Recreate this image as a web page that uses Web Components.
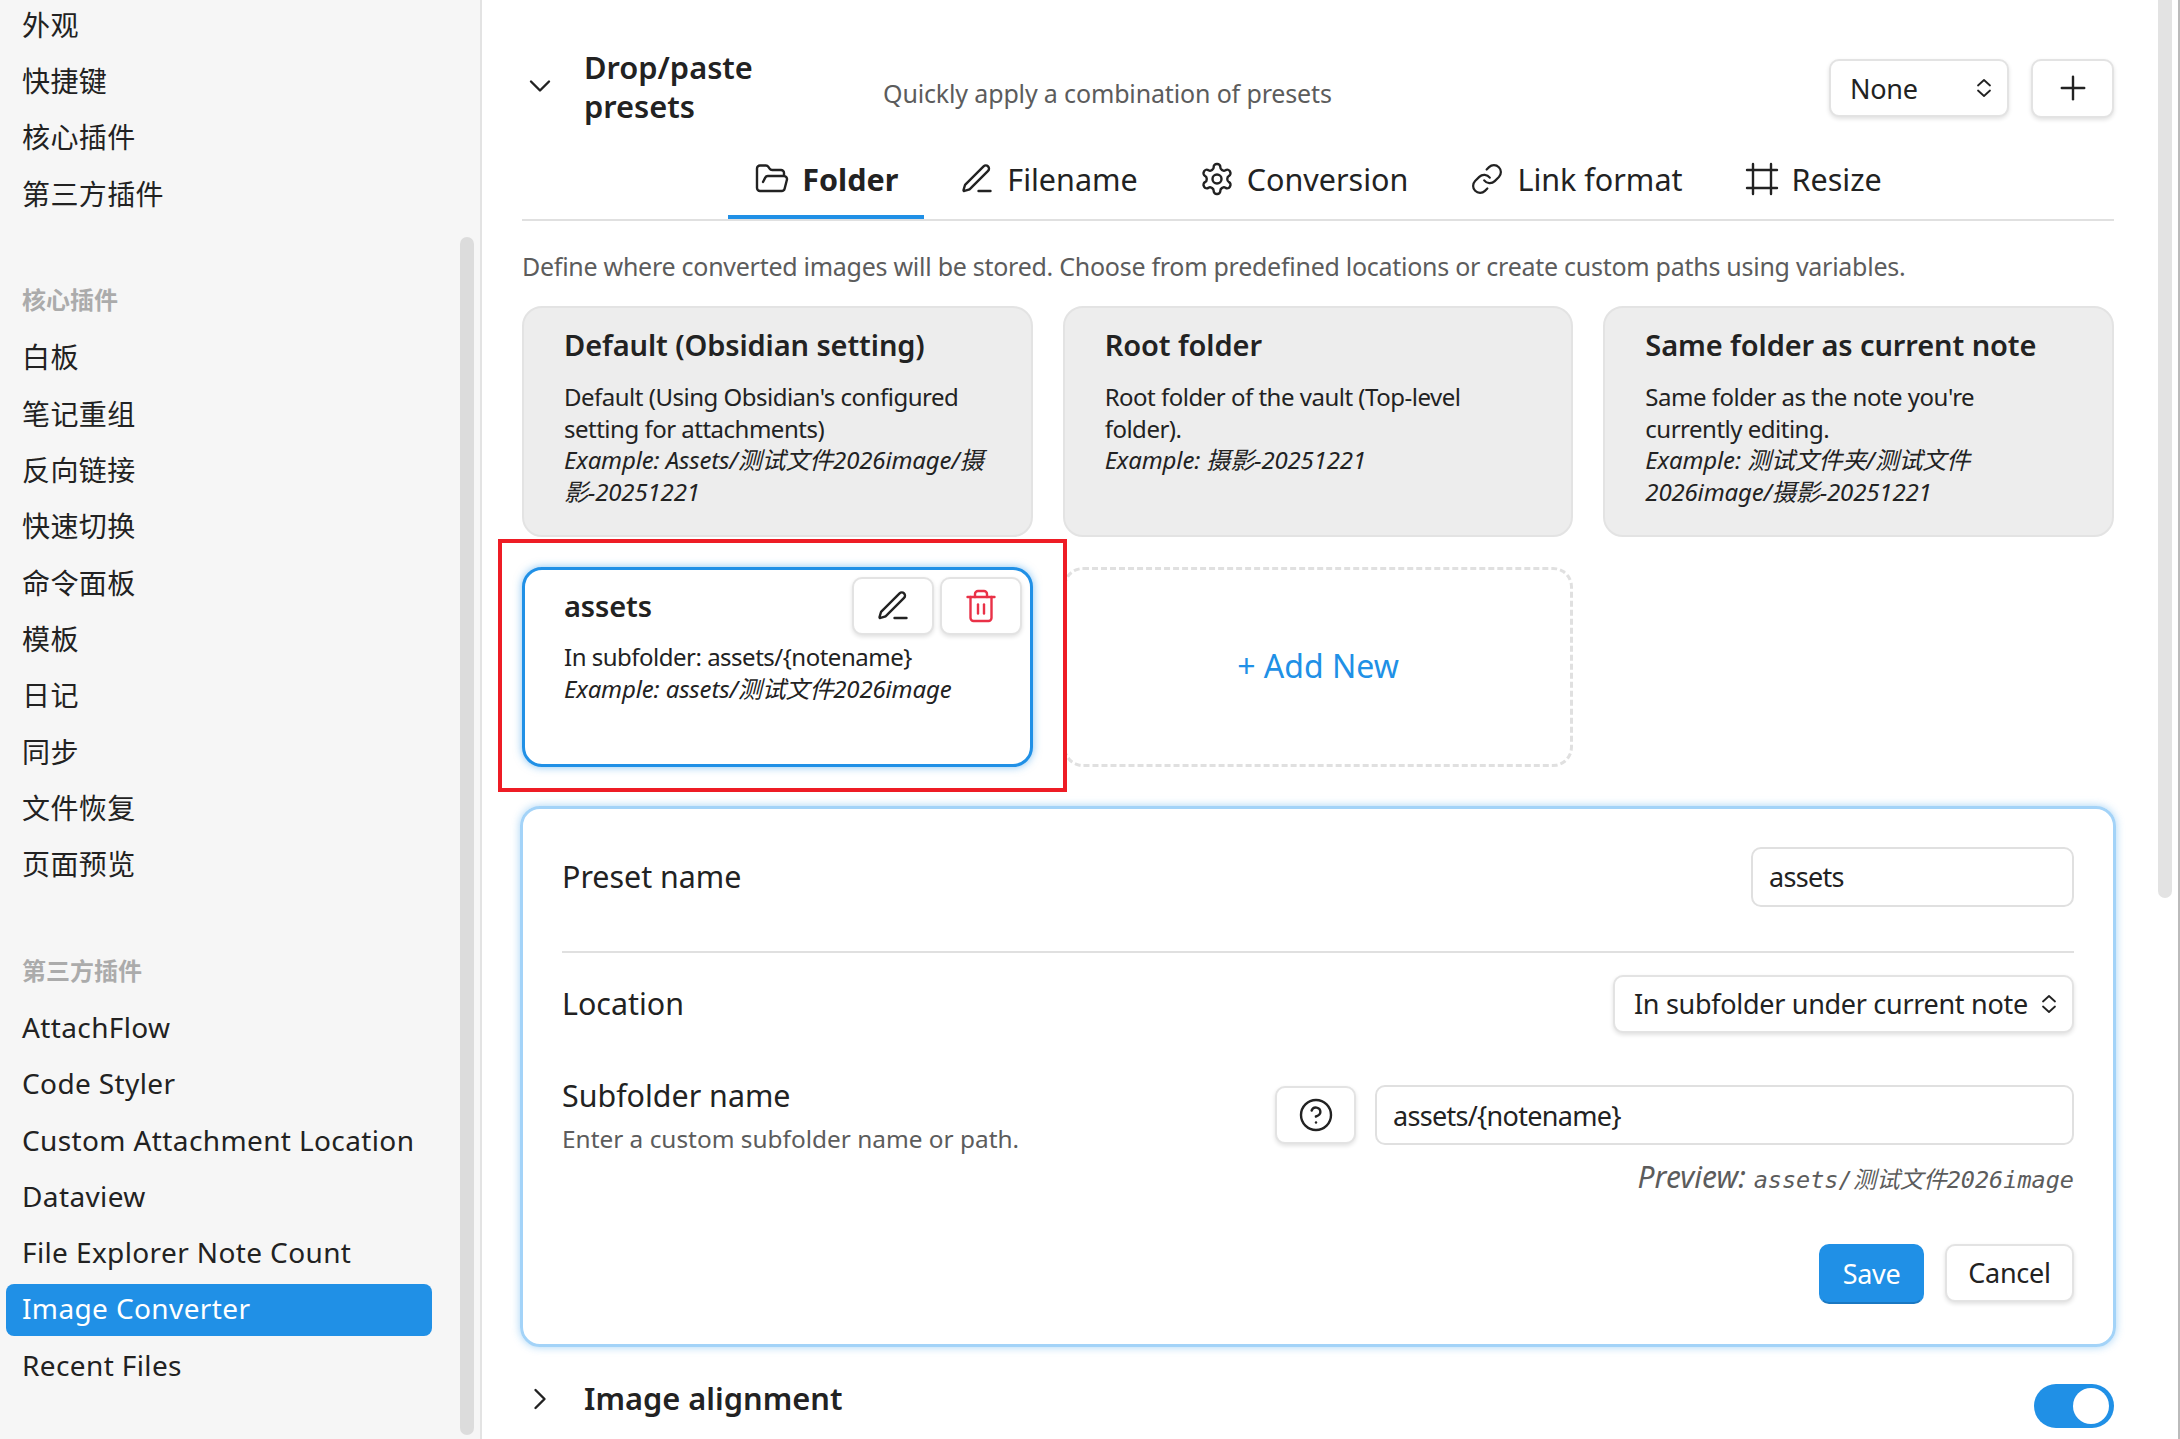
<!DOCTYPE html>
<html lang="zh">
<head>
<meta charset="utf-8">
<title>Image Converter settings</title>
<style>
    html, body {
        margin: 0;
        height: 100%;
        overflow: hidden;
        background: #fff;
    }
    body {
        font-family: "Noto Sans", "Noto Sans CJK SC", sans-serif;
        color: #222;
    }
</style>
</head>
<body>

<settings-shell>
    <side-nav slot="nav">
        <nav-item>外观</nav-item>
        <nav-item>快捷键</nav-item>
        <nav-item>核心插件</nav-item>
        <nav-item>第三方插件</nav-item>
        <nav-heading>核心插件</nav-heading>
        <nav-item>白板</nav-item>
        <nav-item>笔记重组</nav-item>
        <nav-item>反向链接</nav-item>
        <nav-item>快速切换</nav-item>
        <nav-item>命令面板</nav-item>
        <nav-item>模板</nav-item>
        <nav-item>日记</nav-item>
        <nav-item>同步</nav-item>
        <nav-item>文件恢复</nav-item>
        <nav-item>页面预览</nav-item>
        <nav-heading style="margin-bottom:7px">第三方插件</nav-heading>
        <nav-item latin>AttachFlow</nav-item>
        <nav-item latin>Code Styler</nav-item>
        <nav-item latin>Custom Attachment Location</nav-item>
        <nav-item latin>Dataview</nav-item>
        <nav-item latin>File Explorer Note Count</nav-item>
        <nav-item latin active>Image Converter</nav-item>
        <nav-item latin>Recent Files</nav-item>
    </side-nav>

    <section-head open>
        Drop/paste presets
        <span slot="desc">Quickly apply a combination of presets</span>
        <ui-select slot="actions" style="width:180px">None</ui-select>
        <ui-button slot="actions" icon="plus" style="width:83px;height:59px"></ui-button>
    </section-head>

    <tab-bar>
        <tab-item icon="folder" active>Folder</tab-item>
        <tab-item icon="pen">Filename</tab-item>
        <tab-item icon="gear">Conversion</tab-item>
        <tab-item icon="link">Link format</tab-item>
        <tab-item icon="frame">Resize</tab-item>
    </tab-bar>

    <hint-line>Define where converted images will be stored. Choose from predefined locations or create custom paths using variables.</hint-line>

    <preset-grid>
        <preset-card name="Default (Obsidian setting)">
            Default (Using Obsidian's configured setting for attachments)
            <span slot="example">Example: Assets/测试文件2026image/摄影-20251221</span>
        </preset-card>
        <preset-card name="Root folder">
            Root folder of the vault (Top-level folder).
            <span slot="example">Example: 摄影-20251221</span>
        </preset-card>
        <preset-card name="Same folder as current note">
            Same folder as the note you're currently editing.
            <span slot="example">Example: 测试文件夹/测试文件2026image/摄影-20251221</span>
        </preset-card>
        <preset-card name="assets" selected>
            In subfolder: assets/{notename}
            <span slot="example">Example: assets/测试文件2026image</span>
            <ui-button slot="tools" icon="pen" style="width:82px;height:58px"></ui-button>
            <ui-button slot="tools" icon="trash" danger style="width:82px;height:58px"></ui-button>
        </preset-card>
        <add-card>+ Add New</add-card>
    </preset-grid>

    <edit-panel>
        <form-row divided>
            Preset name
            <ui-input slot="control" style="width:323px">assets</ui-input>
        </form-row>
        <form-row style="margin-top:22px">
            Location
            <ui-select slot="control" style="width:461px">In subfolder under current note</ui-select>
        </form-row>
        <form-row style="margin-top:43px">
            Subfolder name
            <span slot="desc">Enter a custom subfolder name or path.</span>
            <ui-button slot="control" icon="help" style="width:81px;height:58px"></ui-button>
            <ui-input slot="control" style="width:699px">assets/{notename}</ui-input>
        </form-row>
        <preview-line>Preview: <code slot="path">assets/测试文件2026image</code></preview-line>
        <button-row>
            <ui-button primary style="width:105px;height:60px">Save</ui-button>
            <ui-button style="width:129px;height:58px">Cancel</ui-button>
        </button-row>
    </edit-panel>

    <section-head style="margin-top:23px">
        Image alignment
        <toggle-switch slot="actions" on style="margin-top:12px"></toggle-switch>
    </section-head>

    <mark-box slot="overlay" style="left:498px;top:539px;width:569px;height:253px"></mark-box>
</settings-shell>

<script>
    const ICONS = {
        plus: '<path d="M4.5 12h15"/><path d="M12 4.5v15"/>',
        down: '<path d="m6 9 6 6 6-6"/>',
        right: '<path d="m9 18 6-6-6-6"/>',
        folder: '<path d="m6 14 1.5-2.9A2 2 0 0 1 9.24 10H20a2 2 0 0 1 1.94 2.5l-1.54 6a2 2 0 0 1-1.95 1.5H4a2 2 0 0 1-2-2V5a2 2 0 0 1 2-2h3.9a2 2 0 0 1 1.69.9l.81 1.2a2 2 0 0 0 1.67.9H18a2 2 0 0 1 2 2v2"/>',
        pen: '<path d="M13 20h8"/><path d="M16.376 3.622a1 1 0 0 1 3.002 3.002L7.368 18.635a2 2 0 0 1-.855.506l-2.872.838a.5.5 0 0 1-.62-.62l.838-2.872a2 2 0 0 1 .506-.854z"/>',
        gear: '<path d="M12.22 2h-.44a2 2 0 0 0-2 2v.18a2 2 0 0 1-1 1.73l-.43.25a2 2 0 0 1-2 0l-.15-.08a2 2 0 0 0-2.73.73l-.22.38a2 2 0 0 0 .73 2.73l.15.1a2 2 0 0 1 1 1.72v.51a2 2 0 0 1-1 1.74l-.15.09a2 2 0 0 0-.73 2.73l.22.38a2 2 0 0 0 2.73.73l.15-.08a2 2 0 0 1 2 0l.43.25a2 2 0 0 1 1 1.73V20a2 2 0 0 0 2 2h.44a2 2 0 0 0 2-2v-.18a2 2 0 0 1 1-1.73l.43-.25a2 2 0 0 1 2 0l.15.08a2 2 0 0 0 2.73-.73l.22-.39a2 2 0 0 0-.73-2.73l-.15-.08a2 2 0 0 1-1-1.74v-.5a2 2 0 0 1 1-1.74l.15-.09a2 2 0 0 0 .73-2.73l-.22-.38a2 2 0 0 0-2.73-.73l-.15.08a2 2 0 0 1-2 0l-.43-.25a2 2 0 0 1-1-1.73V4a2 2 0 0 0-2-2z"/><circle cx="12" cy="12" r="3"/>',
        link: '<g transform="translate(12 12) scale(.93) translate(-12 -12)"><path d="M10 13a5 5 0 0 0 7.54.54l3-3a5 5 0 0 0-7.07-7.07l-1.72 1.71"/><path d="M14 11a5 5 0 0 0-7.54-.54l-3 3a5 5 0 0 0 7.07 7.07l1.71-1.71"/></g>',
        frame: '<path d="M22 6H2"/><path d="M22 18H2"/><path d="M6 2v20"/><path d="M18 2v20"/>',
        trash: '<path d="M3 6h18"/><path d="M19 6v14c0 1-1 2-2 2H7c-1 0-2-1-2-2V6"/><path d="M8 6V4c0-1 1-2 2-2h4c1 0 2 1 2 2v2"/><path d="M10 11v6"/><path d="M14 11v6"/>',
        help: '<circle cx="12" cy="12" r="10"/><path d="M9.09 9a3 3 0 0 1 5.83 1c0 2-3 3-3 3"/><path d="M12 17h.01"/>'
    };

    const icon = (name, size = 36, width = 1.6) =>
        `<svg width="${size}" height="${size}" viewBox="0 0 24 24" fill="none" stroke="currentColor"
              stroke-width="${width}" stroke-linecap="round" stroke-linejoin="round">${ICONS[name]}</svg>`;

    class ShadowElement extends HTMLElement {
        connectedCallback() {
            if (this.shadowRoot) return;
            this.attachShadow({ mode: 'open' }).innerHTML = this.render();
        }
        render() {
            return '<slot></slot>';
        }
    }

    class SettingsShell extends ShadowElement {
        render() {
            return `<style>
                :host { display: flex; position: relative; height: 1439px; width: 2180px; overflow: hidden; }
                .nav { flex: 0 0 480px; border-right: 2px solid #e3e3e3; background: #f6f6f6; position: relative; overflow: hidden; }
                .main { flex: 1; min-width: 0; padding: 48px 64px 0 40px; border-right: 2px solid #bbb; }
                .thumb { position: absolute; width: 14px; border-radius: 7px; }
                .thumb.nav-bar { left: 460px; top: 237px; height: 1198px; background: #dcdcdc; }
                .thumb.main-bar { left: 2158px; top: -8px; height: 906px; background: #e3e3e3; }
            </style>
            <div class="nav"><slot name="nav"></slot></div>
            <div class="main"><slot></slot></div>
            <div class="thumb nav-bar"></div>
            <div class="thumb main-bar"></div>
            <slot name="overlay"></slot>`;
        }
    }

    class SideNav extends ShadowElement {
        render() {
            return `<style>
                :host { display: flex; flex-direction: column; padding: 0 48px 0 6px; margin-top: -2.4px; }
            </style><slot></slot>`;
        }
    }

    class NavItem extends ShadowElement {
        render() {
            return `<style>
                :host { display: flex; align-items: center; box-sizing: border-box; height: 52px; margin-bottom: 4.3px; padding: 0 16px;
                        border-radius: 8px; font-size: 28px; letter-spacing: 0.38px; white-space: nowrap; color: #222; }
                :host([latin]) { padding-bottom: 3px; }
                :host([active]) { background: #2090e6; color: #fff; }
            </style><slot></slot>`;
        }
    }

    class NavHeading extends ShadowElement {
        render() {
            return `<style>
                :host { display: flex; align-items: center; height: 52px; margin: 50px 0 5.7px; padding: 0 16px;
                        font-size: 24px; font-weight: 700; color: #ababab; }
            </style><slot></slot>`;
        }
    }

    class SectionHead extends ShadowElement {
        render() {
            const open = this.hasAttribute('open');
            return `<style>
                :host { display: flex; align-items: center; }
                .chevron { flex: 0 0 36px; display: flex; color: #222; }
                :host([open]) .chevron { margin-top: -3px; }
                .title { margin-left: 26px; font-size: 30.8px; font-weight: 600; line-height: 39px; color: #222; }
                :host([open]) .title { width: 240px; margin-right: 59px; }
                .desc { flex: 1; font-size: 25px; letter-spacing: -0.15px; color: #5c5c5c; padding-top: 12px; }
                .actions { display: flex; gap: 22px; align-items: center; margin-top: 2px; }
            </style>
            <div class="chevron">${icon(open ? 'down' : 'right')}</div>
            <div class="title"><slot></slot></div>
            <div class="desc"><slot name="desc"></slot></div>
            <div class="actions"><slot name="actions"></slot></div>`;
        }
    }

    class TabBar extends ShadowElement {
        render() {
            return `<style>
                :host { display: flex; justify-content: center; gap: 9px; margin-top: 17px; border-bottom: 2px solid #e0e0e0; }
            </style><slot></slot>`;
        }
    }

    class TabItem extends ShadowElement {
        render() {
            return `<style>
                :host { display: flex; align-items: center; gap: 12px; height: 72px; padding: 0 26px;
                        border-bottom: 4px solid transparent; font-size: 30.5px; color: #222; }
                :host([active]) { border-bottom-color: #2090e6; font-weight: 700; }
                svg { display: block; flex: none; }
            </style>${icon(this.getAttribute('icon'))}<slot></slot>`;
        }
    }

    class HintLine extends ShadowElement {
        render() {
            return `<style>
                :host { display: block; margin-top: 28px; font-size: 25px; line-height: 34px; letter-spacing: -0.27px; color: #5c5c5c; white-space: nowrap; }
            </style><slot></slot>`;
        }
    }

    class PresetGrid extends ShadowElement {
        render() {
            return `<style>
                :host { display: grid; grid-template-columns: repeat(3, 1fr); column-gap: 30px; row-gap: 30px; margin-top: 23px; }
            </style><slot></slot>`;
        }
    }

    class PresetCard extends ShadowElement {
        render() {
            return `<style>
                :host { display: block; position: relative; box-sizing: border-box; min-height: 200px; padding: 17px 40px 27px 40px;
                        background: #ededed; border: 2px solid #e3e3e3; border-radius: 20px; color: #222; }
                :host([selected]) { background: #fff; border: 3px solid #2090e6; box-shadow: 0 0 8px rgba(32,144,230,.55); padding: 16px 30px 25px 39px; }
                :host([selected]) .name { margin-bottom: 15px; }
                .name { font-size: 29px; font-weight: 600; line-height: 40px; letter-spacing: -0.1px; margin-bottom: 16px; }
                .body { font-size: 24px; line-height: 31.7px; letter-spacing: -0.5px; }
                .example { display: block; font-style: italic; letter-spacing: -0.15px; }
                .tools { position: absolute; top: 7px; right: 8px; display: flex; gap: 6px; }
            </style>
            <div class="name">${this.getAttribute('name')}</div>
            <div class="body"><slot></slot><span class="example"><slot name="example"></slot></span></div>
            <div class="tools"><slot name="tools"></slot></div>`;
        }
    }

    class AddCard extends ShadowElement {
        render() {
            return `<style>
                :host { display: flex; align-items: center; justify-content: center; box-sizing: border-box; padding-bottom: 2px;
                        border: 3px dashed #e0e0e0; border-radius: 20px; font-size: 32px; color: #2090e6; }
            </style><slot></slot>`;
        }
    }

    class EditPanel extends ShadowElement {
        render() {
            return `<style>
                :host { display: block; box-sizing: border-box; margin: 39px -2px 0; padding: 38px 39px 40px 39px;
                        border: 3px solid #a3d3f8; border-radius: 20px; box-shadow: 0 0 8px rgba(32,144,230,.4); }
            </style><slot></slot>`;
        }
    }

    class FormRow extends ShadowElement {
        render() {
            return `<style>
                :host { display: flex; align-items: center; justify-content: space-between; }
                :host([divided]) { padding-bottom: 44px; border-bottom: 2px solid #e0e0e0; }
                .name { font-size: 30.4px; line-height: 40px; color: #222; }
                .desc { font-size: 24.4px; line-height: 32px; margin-top: 7px; color: #5c5c5c; }
                .control { display: flex; gap: 19px; align-items: center; }
                ::slotted([slot=desc]) { display: block; }
            </style>
            <div>
                <div class="name"><slot></slot></div>
                ${this.querySelector('[slot=desc]') ? '<div class="desc"><slot name="desc"></slot></div>' : ''}
            </div>
            <div class="control"><slot name="control"></slot></div>`;
        }
    }

    class PreviewLine extends ShadowElement {
        render() {
            return `<style>
                :host { display: flex; justify-content: flex-end; align-items: baseline; margin-top: 6px; font-size: 30px; line-height: 32px;
                        font-style: italic; color: #5c5c5c; white-space: pre; }
                ::slotted(code) { font-family: "DejaVu Sans Mono", "Noto Sans CJK SC", monospace; font-size: 23.5px; }
            </style><slot></slot><slot name="path"></slot>`;
        }
    }

    class ButtonRow extends ShadowElement {
        render() {
            return `<style>
                :host { display: flex; justify-content: flex-end; align-items: flex-start; gap: 21px; margin-top: 48px; }
            </style><slot></slot>`;
        }
    }

    class UiButton extends ShadowElement {
        render() {
            const name = this.getAttribute('icon');
            return `<style>
                :host { display: flex; align-items: center; justify-content: center; box-sizing: border-box;
                        background: #fff; border: 2px solid #e3e3e3; border-radius: 10px; box-shadow: 0 2px 4px rgba(0,0,0,.12);
                        font-size: 27px; letter-spacing: -0.3px; color: #222; }
                :host([danger]) { color: #e93147; }
                :host([primary]) { background: #2090e6; border-color: #2090e6; border-bottom-color: #1a78c2; color: #fff; box-shadow: none; }
                svg { display: block; }
            </style>${name ? icon(name, 36, 1.6) : ''}<slot></slot>`;
        }
    }

    class UiSelect extends ShadowElement {
        render() {
            return `<style>
                :host { display: flex; align-items: center; justify-content: space-between; box-sizing: border-box; height: 58px;
                        padding: 0 15px 0 19px; background: #fff; border: 2px solid #e3e3e3; border-radius: 10px;
                        box-shadow: 0 2px 4px rgba(0,0,0,.12); font-size: 27px; letter-spacing: -0.3px; color: #222; white-space: nowrap; }
                svg { display: block; flex: none; }
            </style><slot></slot>
            <svg width="16" height="22" viewBox="0 0 16 22" fill="none" stroke="currentColor" stroke-width="1.8" stroke-linecap="round" stroke-linejoin="round">
                <path d="m2 8.5 6-5.5 6 5.5"/><path d="m2 13.5 6 5.5 6-5.5"/>
            </svg>`;
        }
    }

    class UiInput extends ShadowElement {
        render() {
            return `<style>
                :host { display: flex; align-items: center; box-sizing: border-box; height: 60px; padding: 0 16px;
                        background: #fff; border: 2px solid #e0e0e0; border-radius: 10px; font-size: 27px; letter-spacing: -0.7px; color: #222; }
            </style><slot></slot>`;
        }
    }

    class ToggleSwitch extends ShadowElement {
        render() {
            return `<style>
                :host { display: block; position: relative; width: 80px; height: 44px; border-radius: 22px; background: #2090e6; }
                .knob { position: absolute; right: 5px; top: 4px; width: 36px; height: 36px; border-radius: 50%; background: #fff; }
            </style><div class="knob"></div>`;
        }
    }

    class MarkBox extends ShadowElement {
        render() {
            return `<style>
                :host { display: block; position: absolute; box-sizing: border-box; border: 4px solid #ee1c25; pointer-events: none; }
            </style>`;
        }
    }

    customElements.define('settings-shell', SettingsShell);
    customElements.define('side-nav', SideNav);
    customElements.define('nav-item', NavItem);
    customElements.define('nav-heading', NavHeading);
    customElements.define('section-head', SectionHead);
    customElements.define('tab-bar', TabBar);
    customElements.define('tab-item', TabItem);
    customElements.define('hint-line', HintLine);
    customElements.define('preset-grid', PresetGrid);
    customElements.define('preset-card', PresetCard);
    customElements.define('add-card', AddCard);
    customElements.define('edit-panel', EditPanel);
    customElements.define('form-row', FormRow);
    customElements.define('preview-line', PreviewLine);
    customElements.define('button-row', ButtonRow);
    customElements.define('ui-button', UiButton);
    customElements.define('ui-select', UiSelect);
    customElements.define('ui-input', UiInput);
    customElements.define('toggle-switch', ToggleSwitch);
    customElements.define('mark-box', MarkBox);
</script>
</body>
</html>
